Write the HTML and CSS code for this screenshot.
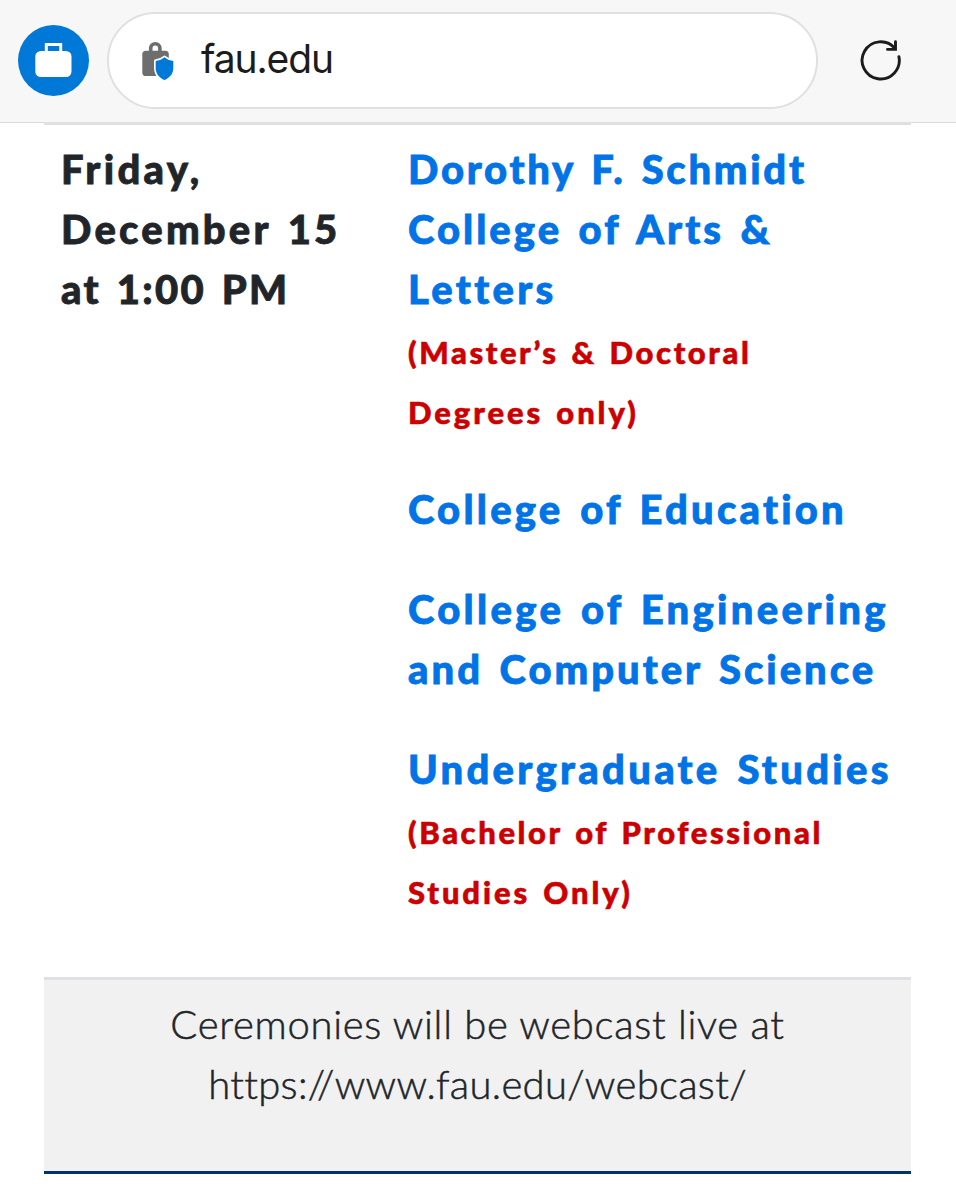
FILE: index.html
```
<!DOCTYPE html>
<html lang="en">
<head>
    <meta charset="UTF-8">
    <meta name="viewport" content="width=device-width, initial-scale=1.0">
    <title>Commencement Schedule</title>
    <link rel="stylesheet" href="styles.css">
</head>
<body>
    <header class="browser-bar">
        <div class="profile">
            <svg width="37" height="36" viewBox="0 0 37 36">
                <path d="M11.3 10V2.500h14.400V10" fill="none" stroke="#fff" stroke-width="3"/>
                <rect x="0.3" y="9" width="36.2" height="26" rx="5.5" fill="#fff"/>
            </svg>
        </div>
        <div class="address">
            <svg class="lock" width="34" height="40" viewBox="0 0 34 40">
                <path d="M9.7 11V7.3a4.6 4.6 0 0 1 9.2 0V11" fill="none" stroke="#6e6e6e" stroke-width="3.6"/>
                <rect x="1.3" y="9.7" width="26.5" height="25.3" rx="3.6" fill="#6e6e6e"/>
                <path d="M23.5 16.2C20.5 18.7 17.8 19.6 14.7 19.9V27c0 6 3.8 9.9 8.8 12 5-2.1 8.8-6 8.8-12v-7.100C29.2 19.6 26.5 18.7 23.5 16.2Z" fill="#0078d7" stroke="#fff" stroke-width="3.4" paint-order="stroke" stroke-linejoin="round"/>
            </svg>
            <span class="url">fau.edu</span>
        </div>
        <svg class="reload" width="44" height="44" viewBox="0 0 44 44">
            <path d="M39.9 18.600A18.600 18.600 0 1 1 36 10.500" fill="none" stroke="#1b1b1b" stroke-width="2.900" stroke-linecap="round"/>
            <path d="M36.500 3.700v7.700h-8" fill="none" stroke="#1b1b1b" stroke-width="2.900" stroke-linecap="round"/>
        </svg>
    </header>

    <main class="schedule">
        <div class="row">
            <div class="date">
                <span class="t1">Friday,</span><br>
                <span class="t2">December 15</span><br>
                <span class="t3">at 1:00 PM</span>
            </div>
            <div class="colleges">
                <p><a class="c1">Dorothy F. Schmidt</a><br>
                    <a class="c2">College of Arts &amp;</a><br>
                    <a class="c3">Letters</a><br>
                    <span class="note n1">(Master’s &amp; Doctoral</span><br>
                    <span class="note n2">Degrees only)</span></p>
                <p><a class="c4">College of Education</a></p>
                <p><a class="c5">College of Engineering</a><br>
                    <a class="c6">and Computer Science</a></p>
                <p><a class="c7">Undergraduate Studies</a><br>
                    <span class="note n3">(Bachelor of Professional</span><br>
                    <span class="note n4">Studies Only)</span></p>
            </div>
        </div>
        <div class="webcast">
            <span class="w1">Ceremonies will be webcast live at</span><br>
            <span class="w2">https://www.fau.edu/webcast/</span>
        </div>
    </main>
</body>
</html>
```
FILE: styles.css
```
* {
    box-sizing: border-box;
}
body {
    margin: 0;
    background: #fff;
    color: #212529;
    font-family: Lato, "Open Sans", sans-serif;
    overflow: hidden;
}
.browser-bar {
    display: flex;
    align-items: center;
    height: 123px;
    padding: 0 0 1px 18px;
    background: #f7f7f7;
    border-bottom: 1px solid #dadada;
}
.profile {
    display: flex;
    align-items: center;
    justify-content: center;
    width: 71px;
    height: 71px;
    padding-bottom: 2px;
    border-radius: 50%;
    background: #0078d7;
}
.address {
    display: flex;
    align-items: center;
    width: 711px;
    height: 97px;
    margin-left: 18px;
    padding-left: 32px;
    background: #fff;
    border: 2px solid #e0e0e0;
    border-radius: 49px;
}
.url {
    margin-left: 26px;
    padding-bottom: 4px;
    font-family: Inter, sans-serif;
    font-size: 39px;
    letter-spacing: -1.1px;
    color: #1c1c1c;
}
.reload {
    margin-left: 41px;
    margin-bottom: 2px;
}
.schedule {
    margin: -1px 45px 0 44px;
    font-size: 40px;
    line-height: 60px;
}
.row {
    display: flex;
    height: 855px;
    padding: 14px 17px 12px;
    border-top: 3px solid #dee0e4;
    font-weight: 900;
    word-spacing: 4px;
    -webkit-text-stroke: 0.8px;
}
.date {
    width: 347px;
}
.colleges {
    white-space: nowrap;
}
.colleges p {
    margin: 0 0 40px;
}
.colleges a {
    color: #0073e6;
}
.colleges .note {
    color: #c00;
    font-size: 31px;
    line-height: 1;
    word-spacing: 3px;
    -webkit-text-stroke: 0.6px;
}
.t1, .c3, .c5, .c7 { letter-spacing: 3.3px; }
.t2, .c4 { letter-spacing: 3.2px; }
.t3 { letter-spacing: 2.3px; }
.c1 { letter-spacing: 2.7px; }
.c2, .c6 { letter-spacing: 3px; }
.n1, .n3 { letter-spacing: 2.6px; }
.n2, .n4 { letter-spacing: 2.9px; }
.webcast {
    height: 197px;
    padding-top: 14px;
    background: #f1f1f1;
    border-top: 3px solid #dee0e4;
    border-bottom: 3px solid #003366;
    font-weight: 300;
    text-align: center;
    -webkit-text-stroke: 0.5px;
}
.w1 { letter-spacing: 0.7px; }
.w2 { letter-spacing: 0.3px; }
```
